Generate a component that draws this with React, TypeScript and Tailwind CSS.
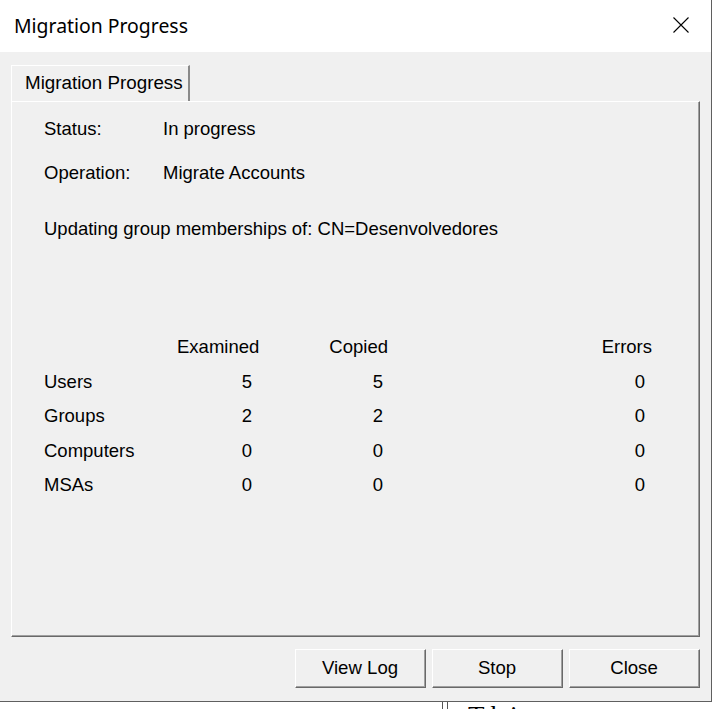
import React from 'react';

type Row = {
  label: string;
  examined: number;
  copied: number;
  errors: number;
};

const rows: Row[] = [
  { label: 'Users', examined: 5, copied: 5, errors: 0 },
  { label: 'Groups', examined: 2, copied: 2, errors: 0 },
  { label: 'Computers', examined: 0, copied: 0, errors: 0 },
  { label: 'MSAs', examined: 0, copied: 0, errors: 0 },
];

const DialogButton = ({ children }: { children: React.ReactNode }) => (
  <button className="h-[39px] w-[131px] border-t border-l border-white border-r border-b border-r-[#696969] border-b-[#696969] bg-[#f0f0f0] p-0">
    <span className="flex h-full w-full items-center justify-center border-r border-b border-[#a0a0a0] text-[18.6px] leading-none text-black">
      {children}
    </span>
  </button>
);

export default function App() {
  return (
    <div className="relative h-[709px] w-[713px] overflow-hidden bg-white font-['Liberation_Sans',Arial,sans-serif] text-black">
      <div className="flex h-[702px] w-[712px] flex-col border-r border-b border-[#5f5f5f]">
        {/* title bar */}
        <div className="flex h-[52px] shrink-0 items-center justify-between bg-white pl-[14px] pr-[22px]">
          <span className="font-['Noto_Sans',sans-serif] text-[19.4px] leading-none text-black">Migration Progress</span>
          <svg width="16" height="16" viewBox="0 0 16 16" className="mb-[2px]">
            <path d="M0.5 0.5 L15.5 15.5 M15.5 0.5 L0.5 15.5" stroke="#000" strokeWidth="1.1" fill="none" />
          </svg>
        </div>

        {/* client area */}
        <div className="flex flex-1 flex-col bg-[#f0f0f0] pl-[11px] pr-[11px] pt-[13px]">
          {/* tab header */}
          <div className="flex h-[36px] w-[179px] items-center border-t border-l border-white border-r-2 border-r-[#8a8a8a] pl-[13px] text-[18.8px] leading-none">
            Migration Progress
          </div>

          {/* tab page */}
          <div className="h-[536px] w-[689px] border-t border-l border-white border-r border-b border-r-[#696969] border-b-[#696969]">
            <div className="h-full w-full border-r border-b border-[#a0a0a0] pl-[32px] pt-[16px] text-[18.5px]">
              <div className="flex h-[21px] items-center">
                <span className="w-[119px]">Status:</span>
                <span>In progress</span>
              </div>
              <div className="mt-[23px] flex h-[21px] items-center">
                <span className="w-[119px]">Operation:</span>
                <span>Migrate Accounts</span>
              </div>
              <div className="mt-[35px] flex h-[21px] items-center">Updating group memberships of: CN=Desenvolvedores</div>

              <div className="mt-[91px] grid grid-cols-[133px_82px_129px_264px] auto-rows-[34.5px] items-center">
                <span />
                <span>Examined</span>
                <span className="text-right">Copied</span>
                <span className="text-right">Errors</span>
                {rows.map((r) => (
                  <React.Fragment key={r.label}>
                    <span>{r.label}</span>
                    <span className="pr-[7px] text-right">{r.examined}</span>
                    <span className="pr-[5px] text-right">{r.copied}</span>
                    <span className="pr-[7px] text-right">{r.errors}</span>
                  </React.Fragment>
                ))}
              </div>
            </div>
          </div>

          {/* buttons */}
          <div className="mt-[12px] flex justify-end gap-[6px]">
            <DialogButton>View Log</DialogButton>
            <DialogButton>Stop</DialogButton>
            <DialogButton>Close</DialogButton>
          </div>
        </div>
      </div>

      {/* page behind the dialog */}
      <div className="flex h-[7px] overflow-hidden">
        <div className="ml-[442px] h-full w-[6px] border-l border-r border-[#555]" />
        <div className="ml-[20px] mt-[1px] font-['Liberation_Serif',serif] text-[27px] leading-none tracking-[6px] text-black">
          This content is
        </div>
      </div>
    </div>
  );
}
